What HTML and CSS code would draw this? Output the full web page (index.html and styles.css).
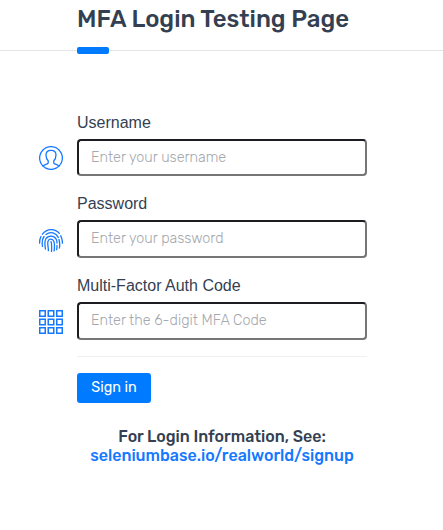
FILE: index.html
```html
<!DOCTYPE html>
<html lang="en">
<head>
<meta charset="utf-8">
<title>MFA Login Testing Page</title>
<link rel="stylesheet" href="styles.css">
</head>
<body>
<header class="header"><h1 class="title">MFA Login Testing Page</h1></header>
<main class="content">
  <form class="form">
    <div class="field field-user">
      <label for="username">Username</label>
      <svg class="icon" viewBox="0 0 24 24"><circle cx="12" cy="12" r="11.4"/><path d="M4.200 20.200C5 18.500 8.800 18.400 9.200 17v-2.200C7.700 13.500 7 11.300 7 8.800 7 5.600 9 4.300 12 4.300s5 1.300 5 4.500c0 2.500-.7 4.700-2.200 6V17c.4 1.400 4.200 1.500 5 3.200"/></svg>
      <input id="username" class="input-user" type="text" placeholder="Enter your username">
    </div>
    <div class="field field-pass">
      <label for="password">Password</label>
      <svg class="icon" viewBox="0 0 24 24"><path d="M3.400 6.200C8 .2 16 .2 20.300 5.400M21.700 7.800c1.300 2.500 1.800 5 1.700 7.400M.6 15.200c-.1-2.400.3-4.600 1.400-6.700M3.500 18.300c-.7-3.700-.5-7 1.600-9.800M7 6.400c4.600-3.400 10-1.600 12.300 3M20 11.500c.8 3 .9 5.800.4 8.500M6.400 21c-.3-2.700-1.300-7 .4-10 2.200-4 8.400-3.900 10.400.3.600 1.200.8 2.500.8 3.700M18 17.500c0 1.500-.1 2.800-.3 4.200M9.400 22.700c0-3.700-1.300-7.200-.3-9.700 1.100-2.400 4.700-2.400 5.700.2.900 2.400.8 6.300.3 9.700M12 13.500c1 3 .8 6.500.5 10"/></svg>
      <input id="password" class="input-pass" type="password" placeholder="Enter your password">
    </div>
    <div class="field field-code">
      <label for="code">Multi-Factor Auth Code</label>
      <svg class="icon grid" viewBox="0 0 24 24"><path d="M.75.75h5.500v5.500H.75zM9.250.75h5.500v5.500h-5.500zM17.750.75h5.500v5.500h-5.500zM.75 9.250h5.500v5.500H.75zM9.250 9.250h5.500v5.500h-5.500zM17.750 9.250h5.500v5.500h-5.500zM.75 17.750h5.500v5.500H.75zM9.250 17.750h5.500v5.500h-5.500zM17.750 17.750h5.500v5.500h-5.500z"/></svg>
      <input id="code" class="input-code" type="text" placeholder="Enter the 6-digit MFA Code">
    </div>
    <hr>
    <button type="button">Sign in</button>
  </form>
  <div class="info">
    <span class="info-text">For Login Information, See:</span>
    <a href="#">seleniumbase.io/realworld/signup</a>
  </div>
</main>
</body>
</html>
```

FILE: styles.css
```css
* { box-sizing: border-box; }
body {
  margin: 0;
  background: #fff;
  color: #343f52;
  font-family: Rubik, Roboto, sans-serif;
  overflow: hidden;
}
.header {
  height: 51px;
  padding: 5px 0 0 77px;
  border-bottom: 1px solid #e3e4e5;
  position: relative;
}
.header::after {
  content: "";
  position: absolute;
  left: 77px;
  top: 47px;
  width: 32px;
  height: 7px;
  border-radius: 2px;
  background: #007bff;
}
.title {
  margin: 0;
  font-size: 24px;
  line-height: 29px;
  font-weight: 500;
  white-space: nowrap;
}
.content { padding: 62px 0 0 39px; }
.form { width: 328px; }
.field {
  display: grid;
  grid-template-columns: 24px 290px;
  column-gap: 14px;
  grid-template-rows: 26px 37px;
}
.field-user { margin-bottom: 18px; }
.field-pass { grid-template-rows: 26px 38px; margin-bottom: 18px; }
.field-code { grid-template-rows: 26px 38px; }
label {
  grid-column: 2;
  font: 16px/19px "Liberation Sans", sans-serif;
}
.icon {
  width: 24px;
  height: 24px;
  margin-top: 7px;
  fill: none;
  stroke: #1479ff;
  stroke-width: 1.3;
  stroke-linecap: round;
}
.field-pass .icon, .field-code .icon { margin-top: 8px; }
.grid { stroke-width: 1.5; stroke-linecap: butt; }
input {
  width: 290px;
  height: 100%;
  border: 2px solid #767676;
  border-color: #1c1d20 #767676 #767676 #1c1d20;
  border-radius: 4px;
  padding: 0 12px 1px;
  background: #fff;
  color: #343f52;
  font-family: Rubik, Roboto, sans-serif;
  font-size: 14.4px;
  font-weight: 300;
}
input::placeholder { color: #a5a8ad; opacity: 1; }
hr {
  margin: 16px 0 16px 38px;
  border: 0;
  border-top: 1px solid #f0f0f1;
}
button {
  display: block;
  margin-left: 38px;
  width: 74px;
  height: 30px;
  padding: 0 0 1px;
  border: 0;
  border-radius: 3px;
  background: #007bff;
  color: #fff;
  font: 400 14.4px/20px Rubik, Roboto, sans-serif;
  white-space: nowrap;
}
.info {
  width: 366px;
  margin-top: 24px;
  text-align: center;
  font-size: 16px;
  line-height: 19px;
  font-weight: 500;
}
.info-text, a { display: block; }
a { color: #1479ff; text-decoration: none; }
```
